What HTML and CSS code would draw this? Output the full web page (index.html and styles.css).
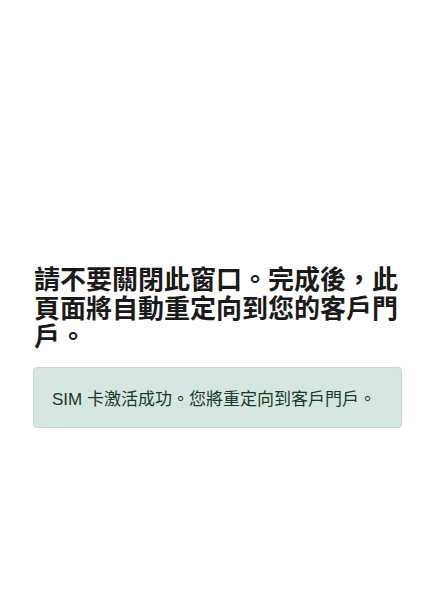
FILE: index.html
```html
<!DOCTYPE html>
<html lang="zh-Hant">
<head>
<meta charset="utf-8">
<title>SIM</title>
<link rel="stylesheet" href="styles.css">
</head>
<body>
<main class="page">
  <h1 class="title">請不要關閉此窗口。完成後，此頁面將自動重定向到您的客戶門戶。</h1>
  <div class="alert">SIM 卡激活成功。您將重定向到客戶門戶。</div>
</main>
</body>
</html>
```
FILE: styles.css
```css
html, body {
  margin: 0;
  padding: 0;
  background: #ffffff;
}
.page {
  padding: 266px 34px 0 33px;
  font-family: "Liberation Sans", "Noto Sans CJK TC", sans-serif;
}
.title {
  margin: 0 0 15px 1px;
  font-size: 26px;
  line-height: 1.1;
  font-weight: 700;
  color: #1a1a1a;
}
.alert {
  box-sizing: border-box;
  height: 61px;
  display: flex;
  align-items: center;
  padding: 0 18px;
  background: #d7e6e0;
  border: 1px solid #c6d9d1;
  border-radius: 4px;
  color: #163a2c;
  font-size: 17px;
}
```
